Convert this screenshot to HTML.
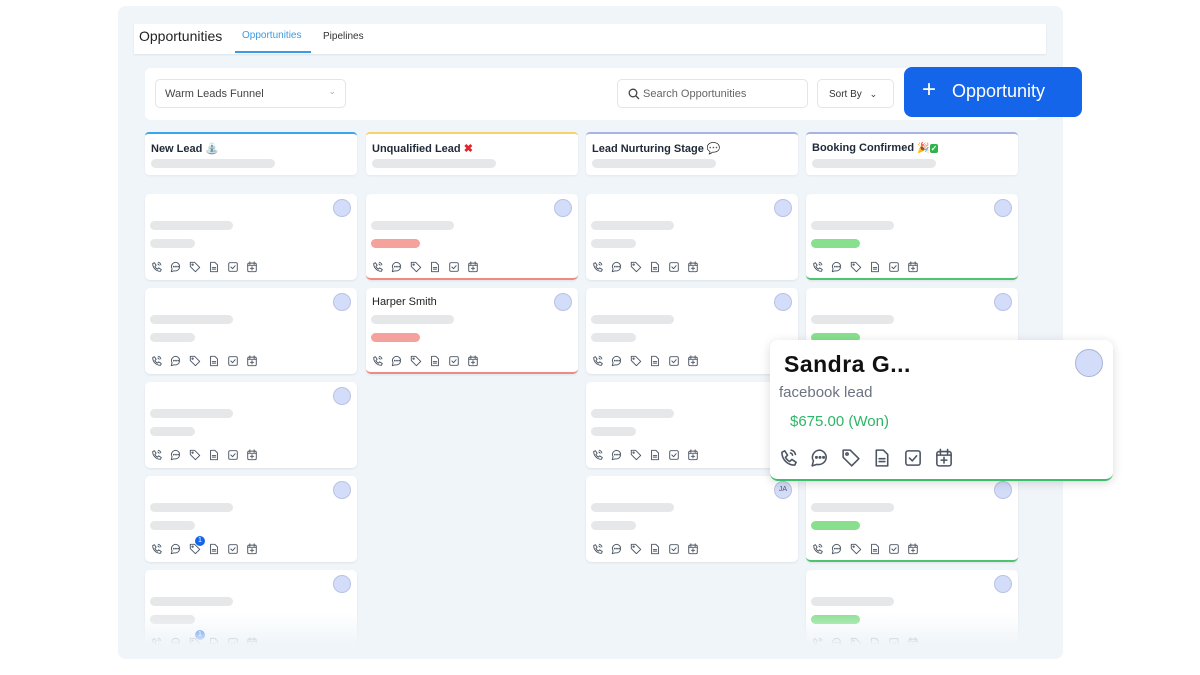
<!DOCTYPE html>
<html><head><meta charset="utf-8"><style>
*{box-sizing:border-box;margin:0;padding:0}
body{width:1200px;height:675px;background:#fff;font-family:"Liberation Sans",sans-serif;position:relative;overflow:hidden}
.abs{position:absolute}
#panel{left:118px;top:6px;width:945px;height:653px;background:#f0f5f9;border-radius:8px;overflow:hidden}
.card{position:absolute;width:212px;height:86px;background:#fff;border-radius:5px;box-shadow:0 1px 2px rgba(0,0,0,.08)}
.av{position:absolute;right:6px;top:5px;width:18px;height:18px;border-radius:50%;background:#d3dcf8;border:1px solid #b9c3e3}
.sk{position:absolute;height:9px;border-radius:5px;background:#e6e7e9}
.icons{position:absolute;left:6px;top:67px;display:flex;gap:7px}
.icons svg{width:12px;height:12px}
.hdr{position:absolute;top:132px;width:212px;height:43px;background:#fff;border-radius:4px;border-top:2px solid;box-shadow:0 1px 2px rgba(0,0,0,.06)}
.hdr b{position:absolute;left:6px;top:8px;font-size:11px;color:#1f2937}
.hdr .sk{left:6px;top:25px;width:124px}
</style></head><body>
<div id="panel" class="abs"></div>
<div class="abs" style="left:134px;top:24px;width:912px;height:30px;background:#fff;box-shadow:0 1px 2px rgba(0,0,0,.08)"></div>
<div class="abs" style="left:139px;top:28px;font-size:14px;color:#222">Opportunities</div>
<div class="abs" style="left:242px;top:30px;font-size:10px;color:#3b9be0">Opportunities</div>
<div class="abs" style="left:235px;top:51px;width:76px;height:2px;background:#3b9be0"></div>
<div class="abs" style="left:323px;top:31px;font-size:10px;color:#333">Pipelines</div>
<div class="abs" style="left:145px;top:68px;width:895px;height:52px;background:#fff;border-radius:6px"></div>
<div class="abs" style="left:155px;top:79px;width:191px;height:29px;border:1px solid #e2e5e9;border-radius:5px;font-size:11px;color:#444;padding:8px 9px">Warm Leads Funnel<span style="position:absolute;right:9px;top:6px;color:#aaa;font-size:9px">⌄</span></div>
<div class="abs" style="left:617px;top:79px;width:191px;height:29px;border:1px solid #e2e5e9;border-radius:5px;font-size:11px;color:#666;padding:8px 0 0 25px"><svg class="abs" style="left:10px;top:8px" width="12" height="12" viewBox="0 0 12 12" fill="none" stroke="#444" stroke-width="1.3"><circle cx="5" cy="5" r="3.8"/><path d="M8 8l3 3"/></svg>Search Opportunities</div>
<div class="abs" style="left:817px;top:79px;width:77px;height:29px;border:1px solid #e2e5e9;border-radius:5px;font-size:10px;color:#333;padding:9px 0 0 11px">Sort By <span style="margin-left:5px;font-size:9px">⌄</span></div>
<div class="abs" style="left:904px;top:67px;width:178px;height:50px;background:#1565ea;border-radius:8px;color:#fff;font-size:18px;padding:14px 0 0 48px"><span style="position:absolute;left:18px;top:9px;font-size:24px;font-weight:300">+</span>Opportunity</div>
<div class="hdr" style="left:145px;border-color:#3ba5ee"><b>New Lead <span style="color:#3a8ee6">⛲</span></b><div class="sk"></div></div>
<div class="hdr" style="left:366px;border-color:#f3d36a"><b>Unqualified Lead <span style="color:#e0242b">✖</span></b><div class="sk"></div></div>
<div class="hdr" style="left:586px;border-color:#a9b4e6"><b>Lead Nurturing Stage <span style="color:#ccc;font-weight:normal">💬</span></b><div class="sk"></div></div>
<div class="hdr" style="left:806px;border-color:#a9b4e6"><b>Booking Confirmed <span style="font-size:10px">🎉</span><span style="background:#2db34a;color:#fff;font-size:8px;padding:0 1px;border-radius:2px">✓</span></b><div class="sk"></div></div>
<div id="cards"></div>
<div class="abs" style="left:118px;top:612px;width:945px;height:47px;background:linear-gradient(rgba(240,245,249,0),#f0f5f9 70%);border-radius:0 0 8px 8px"></div>
<div class="abs" style="left:770px;top:340px;width:343px;height:141px;background:#fff;border-radius:8px;border-bottom:2px solid #3cbf6a;box-shadow:0 2px 10px rgba(0,0,0,.15)">
<div class="abs" style="left:14px;top:11px;font-size:23px;font-weight:bold;color:#111;letter-spacing:.5px">Sandra G...</div>
<div class="abs" style="right:10px;top:9px;width:28px;height:28px;border-radius:50%;background:#d3dcf8;border:1px solid #a9b3d8"></div>
<div class="abs" style="left:9px;top:44px;font-size:15px;color:#6b7280">facebook lead</div>
<div class="abs" style="left:20px;top:73px;font-size:15px;color:#2eb567">$675.00 (Won)</div>
<div id="bigicons" class="abs" style="left:9px;top:108px;display:flex;gap:11px"></div>
</div>
<script>
const P=['<path d="M4 2l2 3-1.5 1.5a7 7 0 003 3L9 8l3 2-1 2c-5 0-9-4-9-9z"/><path d="M8.5 1.5a4 4 0 013 3M8 3.5a2 2 0 011.5 1.5"/>',
'<path d="M7 1.5a5.3 5 0 00-4.6 7.5L1.5 12.5l3.3-1A5.3 5 0 107 1.5z"/><circle cx="4.5" cy="6.6" r=".5"/><circle cx="7" cy="6.6" r=".5"/><circle cx="9.5" cy="6.6" r=".5"/>',
'<path d="M1.5 1.5h5l6 6-5 5-6-6z"/><circle cx="4.2" cy="4.2" r=".8"/>',
'<path d="M3 1.5h5l3 3v8H3z"/><path d="M5 7.5h4M5 9.5h4"/>',
'<rect x="2" y="2" width="10" height="10" rx="1.5"/><path d="M4.5 7l2 2 3-3.5"/>',
'<rect x="2" y="2.5" width="10" height="10" rx="1.5"/><path d="M2 5h10M4.5 1v3M9.5 1v3M7 6.5v4M5 8.5h4"/>'];
function icons(sz,c){return P.map(p=>`<svg width="${sz}" height="${sz}" viewBox="0 0 14 14" fill="none" stroke="${c}" stroke-width="1.1" stroke-linecap="round" stroke-linejoin="round">${p}</svg>`).join('')}
document.getElementById('bigicons').innerHTML=icons(20,'#4b5563').replace(/<svg/g,'<svg style="margin-right:0"');
const cols=[145,366,586,806];
const cards=[
[0,194,'',''],[0,288,'',''],[0,382,'',''],[0,476,'','',1],[0,570,'','',1],
[1,194,'r',''],[1,288,'r','Harper Smith'],
[2,194,'',''],[2,288,'',''],[2,382,'',''],[2,476,'','','','JA'],
[3,194,'g',''],[3,288,'g',''],[3,476,'g',''],[3,570,'g','']];
let h='';
for(const c of cards){
 const x=cols[c[0]],y=c[1];
 let bc=c[2]=='r'?'border-bottom:2px solid #ef8a80;':c[2]=='g'?'border-bottom:2px solid #4fc36f;':'';
 let s=`<div class="card" style="left:${x}px;top:${y}px;${bc}">`;
 s+= c[5]?`<div class="av" style="font-size:7px;color:#556;text-align:center;line-height:16px">JA</div>`:'<div class="av"></div>';
 if(c[3]) s+=`<div class="abs" style="left:6px;top:8px;font-size:11px;color:#222">${c[3]}</div>`;
 s+=`<div class="sk" style="left:5px;top:27px;width:83px"></div>`;
 let col=c[2]=='r'?'#f4a29b':c[2]=='g'?'#88e08f':'#e6e7e9';
 s+=`<div class="sk" style="left:5px;top:45px;width:${c[2]?49:45}px;background:${col}"></div>`;
 s+=`<div class="icons">${icons(12,'#4b5563')}</div>`;
 if(c[4]) s+=`<div class="abs" style="left:50px;top:60px;width:10px;height:10px;border-radius:50%;background:#1565ea;color:#fff;font-size:7px;text-align:center;line-height:10px">1</div>`;
 h+=s+'</div>';
}
document.getElementById('cards').innerHTML=h;
</script>
</body></html>
